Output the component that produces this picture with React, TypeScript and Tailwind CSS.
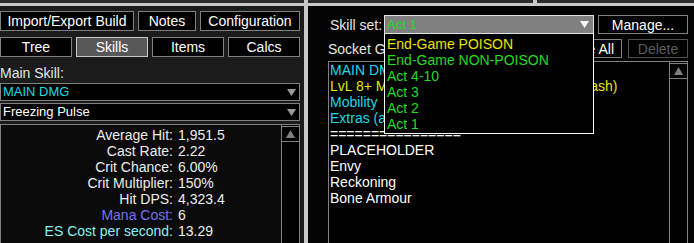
import React from 'react';

const FONT = "font-['Liberation_Sans',Arial,sans-serif]";

const stats: { label: string; value: string; color?: string }[] = [
  { label: 'Average Hit:', value: '1,951.5' },
  { label: 'Cast Rate:', value: '2.22' },
  { label: 'Crit Chance:', value: '6.00%' },
  { label: 'Crit Multiplier:', value: '150%' },
  { label: 'Hit DPS:', value: '4,323.4' },
  { label: 'Mana Cost:', value: '6', color: 'text-[#7272f2]' },
  { label: 'ES Cost per second:', value: '13.29', color: 'text-[#86f0f0]' },
];

const groups: { text: string; color: string }[] = [
  { text: 'MAIN DMG', color: 'text-[#1fd8e6]' },
  { text: 'LvL 8+ MAIN DMG (Cold Snap + Flame Dash)', color: 'text-[#e8e400]' },
  { text: 'Mobility', color: 'text-[#1fd8e6]' },
  { text: 'Extras (auras, curses)', color: 'text-[#1fd8e6]' },
  { text: '================', color: 'text-white' },
  { text: 'PLACEHOLDER', color: 'text-white' },
  { text: 'Envy', color: 'text-white' },
  { text: 'Reckoning', color: 'text-white' },
  { text: 'Bone Armour', color: 'text-white' },
];

const skillSets: { text: string; color: string }[] = [
  { text: 'End-Game POISON', color: 'text-[#e8e400]' },
  { text: 'End-Game NON-POISON', color: 'text-[#22dc22]' },
  { text: 'Act 4-10', color: 'text-[#22dc22]' },
  { text: 'Act 3', color: 'text-[#22dc22]' },
  { text: 'Act 2', color: 'text-[#22dc22]' },
  { text: 'Act 1', color: 'text-[#22dc22]' },
];

const DownTri = ({ fill }: { fill: string }) => (
  <svg width="9" height="7" viewBox="0 0 9 7" className="shrink-0">
    <path d="M0 0H9L4.5 7Z" fill={fill} />
  </svg>
);

const UpTri = () => (
  <svg width="9" height="8" viewBox="0 0 9 8">
    <path d="M4.5 0L9 8H0Z" fill="#808080" />
  </svg>
);

const Btn = ({ label, w, active }: { label: string; w: string; active?: boolean }) => (
  <div
    className={`${w} h-[20px] flex items-center justify-center border ${
      active ? 'bg-[#585858] border-[#c8c8c8]' : 'bg-black border-[#808080]'
    } text-white`}
  >
    {label}
  </div>
);

// vertical scrollbar with only the top arrow visible
const ScrollBar = () => (
  <div className="w-[18px] shrink-0 border-l border-[#808080] bg-black flex flex-col">
    <div className="mt-[1px] h-[16px] border-y border-[#808080] flex items-center justify-center">
      <UpTri />
    </div>
  </div>
);

const Select = ({ text, color }: { text: string; color: string }) => (
  <div className="h-[18px] w-[300px] border border-[#808080] bg-black flex items-center pl-[2px] pr-[3px]">
    <span className={`flex-1 text-[13px] leading-[16px] ${color}`}>{text}</span>
    <DownTri fill="#9a9a9a" />
  </div>
);

export default function App() {
  return (
    <div className={`w-[694px] h-[243px] overflow-hidden bg-black flex flex-col text-[14px] leading-[16px] ${FONT}`}>
      {/* window chrome above the panels */}
      <div className="flex h-[3px] shrink-0">
        <div className="w-[304px] bg-[#2c2c2c]" />
        <div className="w-[4px] bg-[#c8c8c8]" />
        <div className="w-[225px] bg-[#2c2c2c]" />
        <div className="w-[4px] bg-[#c8c8c8]" />
        <div className="flex-1 bg-[#2c2c2c]" />
      </div>
      <div className="h-[3px] shrink-0 bg-[#c8c8c8]" />

      <div className="flex flex-1 min-h-0">
        {/* left panel */}
        <div className="w-[304px] shrink-0 bg-[#1b1b1b] flex flex-col pt-[5px]">
          <div className="flex gap-[4px]">
            <Btn label="Import/Export Build" w="w-[134px]" />
            <Btn label="Notes" w="w-[58px]" />
            <Btn label="Configuration" w="w-[100px]" />
          </div>
          <div className="flex gap-[4px] mt-[6px]">
            <Btn label="Tree" w="w-[72px]" />
            <Btn label="Skills" w="w-[72px]" active />
            <Btn label="Items" w="w-[72px]" />
            <Btn label="Calcs" w="w-[72px]" />
          </div>
          <div className="mt-[8px] h-[16px] text-[#e6e6e6]">Main Skill:</div>
          <div className="mt-[2px]">
            <Select text="MAIN DMG" color="text-[#1fd8e6]" />
          </div>
          <div className="mt-[2px]">
            <Select text="Freezing Pulse" color="text-white" />
          </div>
          <div className="mt-[3px] flex-1 w-[300px] border border-[#808080] border-b-0 bg-[#0b0b0b] flex">
            <div className="flex-1 pt-[2px]">
              {stats.map((s) => (
                <div key={s.label} className="flex h-[16px]">
                  <span className={`w-[172px] text-right ${s.color ?? 'text-[#ececec]'}`}>{s.label}</span>
                  <span className="pl-[5px] text-[#ececec]">{s.value}</span>
                </div>
              ))}
            </div>
            <ScrollBar />
          </div>
        </div>

        <div className="w-[4px] shrink-0 bg-[#c8c8c8]" />

        {/* right panel */}
        <div className="flex-1 bg-[#030303] flex flex-col pr-[6px]">
          <div className="mt-[9px] flex h-[19px] items-center pl-[22px]">
            <span className="w-[54px] text-[#e6e6e6]">Skill set:</span>
            <div className="relative w-[210px] h-[19px]">
              <div className="h-full border border-[#e0e0e0] bg-[#808080] flex items-center pl-[2px] pr-[4px]">
                <span className="flex-1 text-[13px] leading-[16px] text-[#22dc22]">Act 1</span>
                <DownTri fill="#ffffff" />
              </div>
              <div className="absolute left-0 top-full z-10 w-[210px] border border-t-0 border-white bg-black pt-[2px] pb-[1px] pl-[2px]">
                {skillSets.map((s) => (
                  <div key={s.text} className={`h-[16px] whitespace-nowrap ${s.color}`}>
                    {s.text}
                  </div>
                ))}
              </div>
            </div>
            <div className="ml-[4px] w-[90px] h-[19px] border border-[#808080] bg-black flex items-center justify-center text-white">
              Manage...
            </div>
          </div>

          <div className="mt-[5px] flex h-[19px] items-center pl-[20px]">
            <span className="flex-1 text-[#e6e6e6]">Socket Groups:</span>
            <div className="w-[75px] h-[19px] border border-[#808080] bg-black flex items-center justify-center text-white">
              Delete All
            </div>
            <div className="ml-[6px] w-[60px] h-[19px] border border-[#505050] bg-black flex items-center justify-center text-[#5c5c5c]">
              Delete
            </div>
          </div>

          <div className="mt-[3px] ml-[20px] flex-1 border border-[#808080] border-b-0 bg-black flex min-h-0">
            <div className="flex-1 pl-[1px] overflow-hidden">
              {groups.map((g, i) => (
                <div key={i} className={`h-[16px] whitespace-nowrap ${g.color}`}>
                  {g.text}
                </div>
              ))}
            </div>
            <ScrollBar />
          </div>
        </div>
      </div>
    </div>
  );
}
